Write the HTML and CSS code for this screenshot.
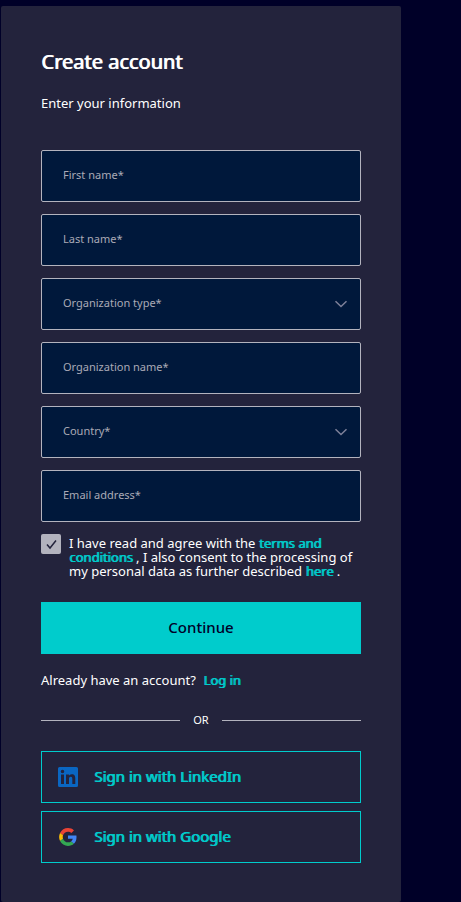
FILE: index.html
```html
<!DOCTYPE html>
<html lang="en">
<head>
<meta charset="UTF-8" />
<meta name="viewport" content="width=device-width, initial-scale=1" />
<title>Create account</title>
<link rel="stylesheet" href="styles.css">
</head>
<body>
  <main class="card">
    <h1>Create account</h1>
    <p class="intro">Enter your information</p>

    <form class="form">
      <div class="field">
        <input type="text" id="first-name" required>
        <label for="first-name">First name*</label>
      </div>
      <div class="field">
        <input type="text" id="last-name" required>
        <label for="last-name">Last name*</label>
      </div>
      <div class="field">
        <select id="org-type" required>
          <option value=""></option>
        </select>
        <label for="org-type">Organization type*</label>
        <svg class="chevron" viewBox="0 0 14 8" aria-hidden="true"><path d="M1.500 1.200 7 6.500l5.500-5.300"/></svg>
      </div>
      <div class="field">
        <input type="text" id="org-name" required>
        <label for="org-name">Organization name*</label>
      </div>
      <div class="field">
        <select id="country" required>
          <option value=""></option>
        </select>
        <label for="country">Country*</label>
        <svg class="chevron" viewBox="0 0 14 8" aria-hidden="true"><path d="M1.500 1.200 7 6.500l5.500-5.300"/></svg>
      </div>
      <div class="field">
        <input type="email" id="email" required>
        <label for="email">Email address*</label>
      </div>

      <div class="consent">
        <input type="checkbox" id="consent" checked>
        <label for="consent">I have read and agree with the <a href="#">terms and conditions</a> , I also consent to the processing of my personal data as further described <a href="#">here</a> .</label>
      </div>

      <button type="submit" class="btn-continue">Continue</button>
    </form>

    <p class="login">Already have an account? <a href="#">Log in</a></p>

    <div class="divider">OR</div>

    <div class="social">
      <button type="button" class="btn-social">
        <svg viewBox="0 0 20 20" aria-hidden="true">
          <path fill="#0a66c2" fill-rule="evenodd" d="M1.500 0h17A1.500 1.500 0 0 1 20 1.500v17a1.500 1.500 0 0 1-1.500 1.500h-17A1.500 1.500 0 0 1 0 18.500v-17A1.500 1.500 0 0 1 1.500 0ZM3 7.500V17h3V7.500H3ZM4.500 2.750a1.750 1.750 0 1 0 0 3.500 1.750 1.750 0 0 0 0-3.500ZM8 7.500V17h3v-4.700c0-1.240.24-2.440 1.780-2.440 1.520 0 1.540 1.420 1.540 2.520V17H17.300v-5.200c0-2.560-.55-4.530-3.540-4.530-1.440 0-2.400.79-2.790 1.530h-.04V7.500H8Z"/>
        </svg>
        <span>Sign in with LinkedIn</span>
      </button>
      <button type="button" class="btn-social">
        <svg viewBox="-3 -3 54 54" aria-hidden="true">
          <path fill="#ea4335" d="M24 9.500c3.540 0 6.710 1.220 9.210 3.600l6.850-6.850C35.900 2.380 30.470 0 24 0 14.620 0 6.510 5.380 2.560 13.220l7.980 6.190C12.430 13.720 17.740 9.500 24 9.500z"/>
          <path fill="#4285f4" d="M46.980 24.550c0-1.570-.15-3.090-.38-4.550H24v9.020h12.940c-.58 2.960-2.260 5.480-4.780 7.180l7.730 6c4.510-4.180 7.090-10.360 7.090-17.650z"/>
          <path fill="#fbbc05" d="M10.530 28.590c-.48-1.450-.76-2.990-.76-4.590s.27-3.140.76-4.590l-7.980-6.190C.92 16.460 0 20.120 0 24s.92 7.540 2.560 10.780l7.970-6.190z"/>
          <path fill="#34a853" d="M24 48c6.480 0 11.930-2.130 15.890-5.810l-7.730-6c-2.150 1.450-4.920 2.300-8.160 2.300-6.260 0-11.570-4.220-13.470-9.910l-7.980 6.190C6.510 42.620 14.620 48 24 48z"/>
        </svg>
        <span>Sign in with Google</span>
      </button>
    </div>
  </main>
</body>
</html>
```
FILE: styles.css
```css
* {
  box-sizing: border-box;
}
body {
  margin: 0;
  padding: 6px 1px 0;
  background-color: #000028;
  color: #fff;
  font-family: "Noto Sans", sans-serif;
  font-size: 13px;
}
h1, p {
  margin: 0;
}
a {
  color: #00cccc;
  text-decoration: none;
}
/* heavier strokes at the regular width */
h1, a, .btn-social {
  font-weight: 400;
  text-shadow: 1px 0 currentColor;
}
.card {
  max-width: 400px;
  padding: 40px 40px 39px;
  background-color: #23233c;
  border-radius: 2px;
}
h1 {
  font-size: 20px;
  line-height: 32px;
}
.intro {
  margin-top: 16px;
  line-height: 18px;
}
.form {
  display: flex;
  flex-direction: column;
  gap: 12px;
  margin-top: 38px;
}
.field {
  position: relative;
}
.field input, .field select {
  display: block;
  width: 100%;
  height: 52px;
  padding: 0 21px;
  background-color: #00183b;
  border: 1px solid #b3b3be;
  border-radius: 2px;
  color: #fff;
  font: inherit;
  appearance: none;
}
/* label sits over the empty field */
.field label {
  position: absolute;
  inset: 0 22px 4px;
  display: flex;
  align-items: center;
  color: #aaaab6;
  font-size: 11px;
  pointer-events: none;
}
.chevron {
  position: absolute;
  top: 22px;
  right: 13px;
  width: 14px;
  height: 8px;
  fill: none;
  stroke: #7d8099;
  stroke-width: 1.5;
  pointer-events: none;
}
.consent {
  display: flex;
  align-items: flex-start;
  gap: 8px;
}
.consent input {
  flex: none;
  width: 20px;
  height: 20px;
  margin: 0;
  background-color: #b3b3be;
  border-radius: 2px;
  appearance: none;
}
.consent input:checked {
  background-image: url("data:image/svg+xml,%3Csvg xmlns='http://www.w3.org/2000/svg' viewBox='0 0 20 20'%3E%3Cpath d='M6 10.500l3 3.500 6-7.500' fill='none' stroke='%2323233c' stroke-width='1.500'/%3E%3C/svg%3E");
}
.consent label {
  margin-top: 2px;
  line-height: 14px;
}
.btn-continue {
  height: 52px;
  margin-top: 12px;
  padding: 0 0 2px;
  background-color: #00cccc;
  border: none;
  color: #000028;
  font: 500 15px "Noto Sans", sans-serif;
  cursor: pointer;
}
.login {
  margin-top: 17px;
  line-height: 18px;
}
.login a {
  margin-left: 4px;
}
.divider {
  display: flex;
  align-items: center;
  gap: 13px;
  margin-top: 22px;
  font-size: 11px;
  line-height: 18px;
}
.divider::before, .divider::after {
  content: "";
  flex: 1;
  height: 1px;
  background-color: #b3b3be;
}
.social {
  display: grid;
  gap: 8px;
  margin-top: 22px;
}
.btn-social {
  display: flex;
  align-items: center;
  gap: 16px;
  height: 52px;
  padding: 0 16px;
  background: none;
  border: 1px solid #00cccc;
  color: #00cccc;
  font-family: "Noto Sans", sans-serif;
  font-size: 15px;
  cursor: pointer;
}
.btn-social svg {
  width: 20px;
  height: 20px;
}
.btn-social span {
  padding-bottom: 2px;
}
```
